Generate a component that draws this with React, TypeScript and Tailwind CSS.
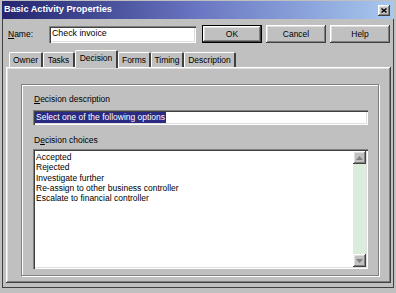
const raised =
  "shadow-[inset_-1px_-1px_0_#404040,inset_1px_1px_0_#ffffff,inset_-2px_-2px_0_#808080,inset_2px_2px_0_#dfdfdf]";
const sunken =
  "shadow-[inset_1px_1px_0_#808080,inset_2px_2px_0_#404040,inset_-1px_-1px_0_#ffffff,inset_-2px_-2px_0_#dfdfdf]";

const tabs = [
  { name: "Owner", w: "w-[34px]" },
  { name: "Tasks", w: "w-[32px]" },
  { name: "Decision", w: "w-[43px]", active: true },
  { name: "Forms", w: "w-[33px]" },
  { name: "Timing", w: "w-[33px]" },
  { name: "Description", w: "w-[52px]" },
];

const choices = [
  "Accepted",
  "Rejected",
  "Investigate further",
  "Re-assign to other business controller",
  "Escalate to financial controller",
];

const ScrollButton = ({ down }: { down?: boolean }) => (
  <div className={`w-[13px] h-[13px] bg-[#c0c0c0] flex items-center justify-center ${raised}`}>
    <svg width="7" height="4" viewBox="0 0 7 4">
      <path d={down ? "M0 0h7L3.5 4z" : "M0 4h7L3.5 0z"} fill="#808080" />
    </svg>
  </div>
);

export default function App() {
  return (
    <div className="w-[396px] h-[293px] bg-[#c0c0c0] pl-[2px] pr-[2px] pt-[1px] pb-[5px] flex flex-col font-['Liberation_Sans',Arial,sans-serif] text-[8.5px] text-black">
      {/* title bar */}
      <div className="h-[18px] shrink-0 flex items-center pl-[2px] pr-[4px] bg-gradient-to-r from-[#25256e] via-[#6a76c2] to-[#a8c8ee]">
        <span className="text-white font-bold text-[9.2px] leading-none">Basic Activity Properties</span>
        <div className={`ml-auto w-[12px] h-[11px] bg-[#c0c0c0] flex items-center justify-center ${raised}`}>
          <svg width="6" height="5" viewBox="0 0 6 5">
            <path d="M0.5 0.5L5.5 4.5M5.5 0.5L0.5 4.5" stroke="#000" strokeWidth="1.4" />
          </svg>
        </div>
      </div>

      <div className="flex-1 flex flex-col border-l border-r border-b border-[#404040] pl-[3px] pr-[2px] pb-[4px]">
        {/* name row */}
        <div className="flex items-center mt-[6px] h-[18px]">
          <span className="w-[43px] pl-[2px]">
            <span className="underline">N</span>ame:
          </span>
          <div className={`w-[147px] h-[17px] bg-white flex items-center pl-[3px] text-[8.8px] ${sunken}`}>
            Check invoice
          </div>
          <div className="ml-[6px] w-[60px] h-[18px] border border-black flex">
            <div className={`flex-1 flex items-center justify-center ${raised}`}>OK</div>
          </div>
          <div className={`ml-[4px] w-[60px] h-[18px] flex items-center justify-center ${raised}`}>Cancel</div>
          <div className={`ml-[4px] w-[60px] h-[18px] flex items-center justify-center ${raised}`}>Help</div>
        </div>

        {/* tabs */}
        <div className="flex items-end h-[17px] mt-[7px] pl-[3px] relative z-10">
          {tabs.map((t) =>
            t.active ? (
              <div
                key={t.name}
                className={`${t.w} h-[18px] -mb-px bg-[#c0c0c0] border-l border-t border-white border-r-2 border-r-[#404040] rounded-t-[2px] flex items-center justify-center pb-[2px]`}
              >
                {t.name}
              </div>
            ) : (
              <div
                key={t.name}
                className={`${t.w} h-[15px] border-l border-t border-white border-r-2 border-r-[#404040] rounded-t-[2px] flex items-center justify-center`}
              >
                {t.name}
              </div>
            )
          )}
        </div>

        {/* tab panel */}
        <div className={`flex-1 flex flex-col pt-[17px] pl-[15px] pr-[12px] pb-[7px] ${raised}`}>
          <div className="flex-1 flex flex-col border border-[#808080] shadow-[1px_1px_0_#ffffff,inset_1px_1px_0_#ffffff] pt-[9px] pl-[11px] pr-[10px] pb-[6px]">
            <div className="leading-[10px] pl-[1px]">
              <span className="underline">D</span>ecision description
            </div>
            <div className={`mt-[6px] h-[15px] bg-white flex items-center pl-[2px] ${sunken}`}>
              <span className="bg-[#2a2a82] text-white leading-[11px] px-[1px]">Select one of the following options</span>
            </div>
            <div className="mt-[10px] leading-[10px] pl-[1px]">
              D<span className="underline">e</span>cision choices
            </div>
            <div className={`mt-[4px] flex-1 bg-white flex p-[2px] ${sunken}`}>
              <div className="flex-1 pt-[1px] pl-[1px] leading-[10.3px]">
                {choices.map((c) => (
                  <div key={c}>{c}</div>
                ))}
              </div>
              <div className="w-[13px] flex flex-col">
                <ScrollButton />
                <div className="flex-1 bg-[#dcecdc]" />
                <ScrollButton down />
              </div>
            </div>
          </div>
        </div>
      </div>
    </div>
  );
}
